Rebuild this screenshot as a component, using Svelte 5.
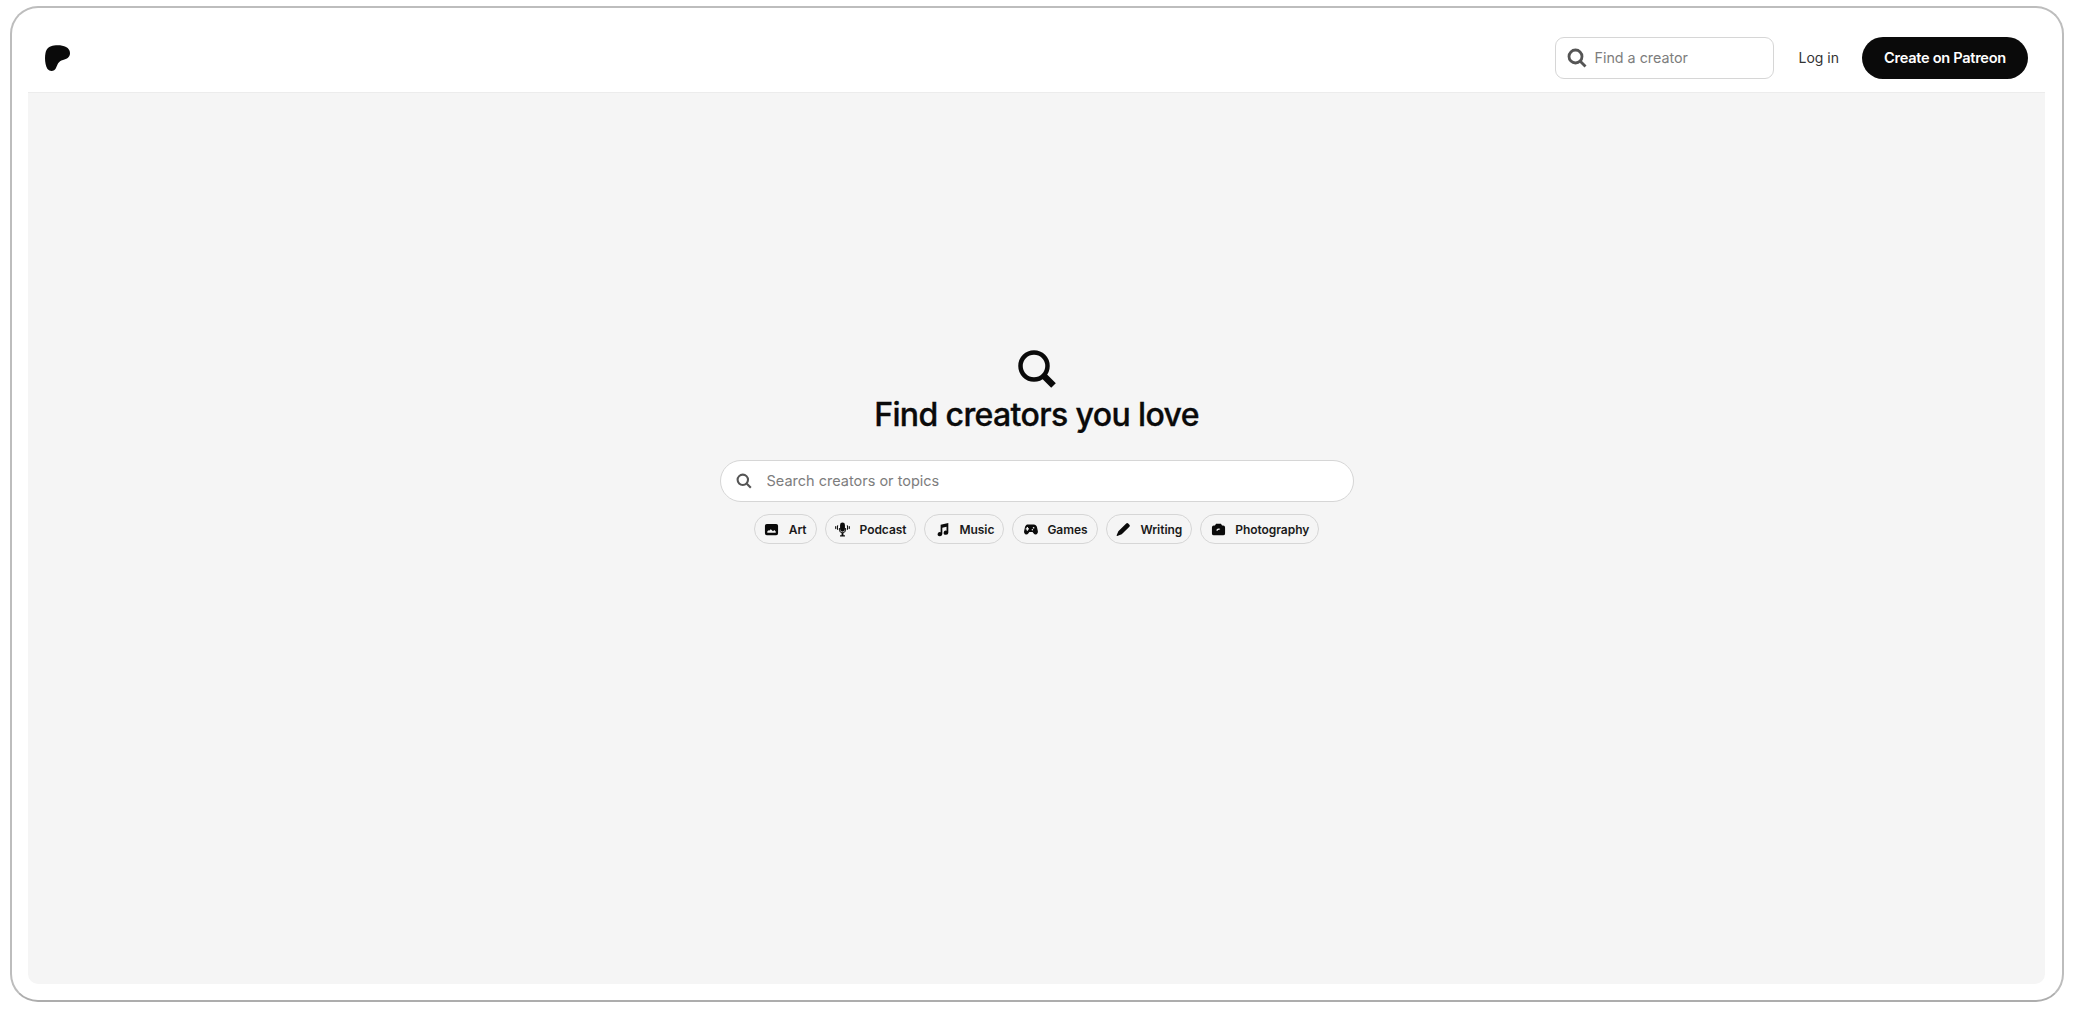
<script lang="ts">
  const topics = [
    {
      label: 'Art',
      icon: 'M3 2h10a2 2 0 0 1 2 2v8a2 2 0 0 1-2 2H3a2 2 0 0 1-2-2V4a2 2 0 0 1 2-2ZM3.5 11.5h9V10L11 8.600 9.600 9.800 7.200 7.600 5.400 9.400l-.7-.5-1.200 1.100Z',
    },
    {
      label: 'Podcast',
      icon: 'M8 .5a2.600 2.600 0 0 1 2.600 2.600v4.600a2.600 2.600 0 0 1-5.200 0V3.100A2.600 2.600 0 0 1 8 .5ZM4.200 6.400h1v1.500A2.800 2.800 0 0 0 8 10.800a2.800 2.800 0 0 0 2.800-2.900V6.400h1v1.600A3.900 3.900 0 0 1 9 11.800V14h1.600v1.400H5.400V14H7v-2.200A3.900 3.900 0 0 1 4.200 8ZM2.400 3.400l1.100.4a6 6 0 0 0 0 4.200l-1.100.5a7 7 0 0 1 0-5.100ZM.4 4.300l1 .3a4 4 0 0 0 0 2.600l-1 .4a5 5 0 0 1 0-3.300ZM13.600 3.400a7 7 0 0 1 0 5.100L12.500 8a6 6 0 0 0 0-4.200ZM15.600 4.300a5 5 0 0 1 0 3.300l-1-.4a4 4 0 0 0 0-2.600Z',
    },
    {
      label: 'Music',
      icon: 'M6 2.800 14.200 1v10.400a2.500 2.200 0 1 1-1.900-2.100V5L7.800 6v6.900a2.500 2.200 0 1 1-1.800-2.100Z',
    },
    {
      label: 'Games',
      icon: 'M4.400 2.600h7.200c1.600 0 2.700 1 3.200 2.500l1 4.400c.4 2-.6 3.500-2.100 3.700-1 .1-1.800-.4-2.500-1.300l-1-1.300H6.800l-1 1.300c-.7.9-1.500 1.400-2.500 1.300C1.800 13 .8 11.500 1.200 9.500l1-4.400C2.700 3.600 3.800 2.600 4.400 2.600ZM4 5.300v1.300H2.900v1.300H4v1.300h1.300V7.900h1.100V6.600H5.300V5.300ZM11.300 5.200a.9.900 0 1 0 0 1.800.9.900 0 0 0 0-1.800ZM10 7.500a.8.800 0 1 0 0 1.600.8.800 0 0 0 0-1.600Z',
    },
    {
      label: 'Writing',
      icon: 'M10.900 1.700a1.500 1.500 0 0 1 2.100 0l1.300 1.300a1.500 1.500 0 0 1 0 2.100l-8.200 8-4.800 1.700a.5.500 0 0 1-.6-.6L2.500 9.900Z',
    },
    {
      label: 'Photography',
      icon: 'M5.400 1.800h5.200l1.200 2h1.200a2 2 0 0 1 2 2v6.400a2 2 0 0 1-2 2H3a2 2 0 0 1-2-2V5.800a2 2 0 0 1 2-2h1.200ZM8 7a2.400 2.400 0 0 0-2.300 2.400h1.500A1 1 0 0 1 8.300 8.400L10 7.400A2.400 2.400 0 0 0 8 7Z',
    },
  ];
</script>

<div class="window">
  <header class="nav">
    <svg class="logo" viewBox="0 0 25 26" aria-label="Patreon">
      <path d="M9 .6C15-.6 25 1 25 8c0 4-3 6-7 7-5 1.500-5 4-7 8-1.500 3.500-6 4-8.500 1C0 20-.5 13 .5 8 1.500 3 5 1.100 9 .6Z" />
    </svg>
    <div class="nav-right">
      <label class="nav-search">
        <svg class="nav-search-icon" viewBox="0 0 20 20">
          <circle cx="8.500" cy="8.500" r="6.500" />
          <path d="m13.500 13.500 5 5" />
        </svg>
        <input type="text" placeholder="Find a creator" />
      </label>
      <a class="login" href="#login">Log in</a>
      <a class="create" href="#create">Create on Patreon</a>
    </div>
  </header>

  <main class="main">
    <svg class="hero-icon" viewBox="0 0 40 40">
      <circle cx="17" cy="17" r="13.500" />
      <path class="handle" d="m27 27 9.500 9.500" />
    </svg>
    <h1>Find creators you love</h1>
    <label class="search">
      <svg class="search-icon" viewBox="0 0 20 20">
        <circle cx="8.500" cy="8.500" r="6.500" />
        <path d="m13.500 13.500 5 5" />
      </svg>
      <input type="text" placeholder="Search creators or topics" />
    </label>
    <div class="chips">
      {#each topics as topic}
        <button class="chip">
          <svg viewBox="0 0 16 16"><path fill-rule="evenodd" d={topic.icon} /></svg>
          {topic.label}
        </button>
      {/each}
    </div>
  </main>
</div>

<style>
  :global(body) {
    background: #fff;
    font-family: Inter, "Liberation Sans", sans-serif;
    color: #0a0a0a;
  }

  .window {
    box-sizing: border-box;
    width: 2054px;
    height: 996px;
    margin: 6px 0 0 10px;
    padding: 0 17px 16px 16px;
    display: flex;
    flex-direction: column;
    background: #fff;
    border: 2px solid #bdbdbd;
    border-bottom-color: #adadad;
    border-radius: 28px;
  }

  .nav {
    height: 85px;
    flex: none;
    box-sizing: border-box;
    padding: 16px 17px 0 17px;
    display: flex;
    align-items: center;
    justify-content: space-between;
    border-bottom: 1px solid #ececec;
  }

  .logo {
    width: 25px;
    height: 26px;
    fill: #0a0a0a;
  }

  .nav-right {
    display: flex;
    align-items: center;
  }

  .nav-search {
    box-sizing: border-box;
    width: 219px;
    height: 42px;
    padding: 0 12px 0 11px;
    display: flex;
    align-items: center;
    gap: 8px;
    background: #fff;
    border: 1.500px solid #d6d6d6;
    border-radius: 9px;
  }

  .nav-search-icon {
    width: 20px;
    height: 20px;
    flex: none;
    fill: none;
    stroke: #555;
    stroke-width: 2.800;
  }

  input {
    flex: 1;
    min-width: 0;
    padding: 0;
    border: 0;
    outline: 0;
    background: transparent;
    font: inherit;
    color: inherit;
  }

  input::placeholder {
    color: #7d7d7d;
    opacity: 1;
  }

  .nav-search input {
    font-size: 14.300px;
    margin-bottom: 1px;
  }

  .login {
    margin: 0 23px 0 25px;
    font-size: 14px;
    color: #333;
    text-decoration: none;
    margin-bottom: 1px;
  }

  .create {
    box-sizing: border-box;
    width: 166px;
    height: 42px;
    display: flex;
    align-items: center;
    justify-content: center;
    background: #0a0a0a;
    border-radius: 21px;
    color: #fff;
    font-size: 14.600px;
    font-weight: 600;
    letter-spacing: -0.3px;
    text-decoration: none;
  }

  .main {
    flex: 1;
    padding-top: 256px;
    display: flex;
    flex-direction: column;
    align-items: center;
    background: #f5f5f5;
    border-radius: 0 0 10px 10px;
  }

  .hero-icon {
    width: 40px;
    height: 40px;
    fill: none;
    stroke: #0a0a0a;
    stroke-width: 4.500;
  }

  .hero-icon .handle {
    stroke-width: 6.500;
  }

  h1 {
    margin: 6px 0 0;
    font-size: 32px;
    line-height: 40px;
    font-weight: 500;
    letter-spacing: -0.62px;
    -webkit-text-stroke: 0.35px #0a0a0a;
    color: #0a0a0a;
  }

  .search {
    box-sizing: border-box;
    width: 634px;
    height: 42px;
    margin-top: 25px;
    padding: 0 16px;
    display: flex;
    align-items: center;
    gap: 15px;
    background: #fff;
    border: 1.500px solid #d6d6d6;
    border-radius: 21px;
  }

  .search-icon {
    width: 16px;
    height: 16px;
    flex: none;
    margin-left: -1px;
    fill: none;
    stroke: #555;
    stroke-width: 2.600;
  }

  .search input {
    font-size: 14.500px;
    margin-bottom: 2px;
  }

  .chips {
    margin-top: 12px;
    display: flex;
    gap: 8px;
  }

  .chip {
    box-sizing: border-box;
    height: 30px;
    padding: 0 9px 0 10px;
    display: flex;
    align-items: center;
    gap: 10px;
    background: #f5f5f5;
    border: 1.500px solid #d6d6d6;
    border-radius: 15px;
    font-family: inherit;
    font-size: 12px;
    font-weight: 600;
    letter-spacing: -0.05px;
    color: #1a1a1a;
  }

  .chip svg {
    width: 15px;
    height: 15px;
    margin-left: -0.5px;
    margin-right: -0.5px;
    fill: #0a0a0a;
  }
</style>
